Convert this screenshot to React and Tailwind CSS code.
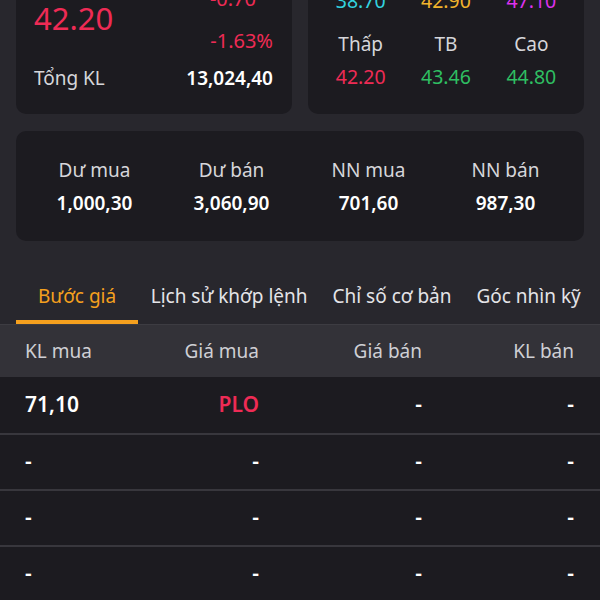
import React from "react";

const stats = [
  { label: "Dư mua", value: "1,000,30" },
  { label: "Dư bán", value: "3,060,90" },
  { label: "NN mua", value: "701,60" },
  { label: "NN bán", value: "987,30" },
];

const tabs = ["Bước giá", "Lịch sử khớp lệnh", "Chỉ số cơ bản", "Góc nhìn kỹ thuật"];

const rows = [
  { klMua: "71,10", giaMua: "PLO", giaBan: "-", klBan: "-" },
  { klMua: "-", giaMua: "-", giaBan: "-", klBan: "-" },
  { klMua: "-", giaMua: "-", giaBan: "-", klBan: "-" },
  { klMua: "-", giaMua: "-", giaBan: "-", klBan: "-" },
];

const PriceCol = ({ label, value, color }) => (
  <div className="flex flex-col items-center">
    <div className="h-[30px] leading-[30px] text-[19px] text-[#d6d6da]">{label}</div>
    <div className={`h-[30px] leading-[30px] text-[19.5px] mt-[3px] ${color}`}>{value}</div>
  </div>
);

export default function App() {
  return (
    <div className="w-[600px] h-[600px] overflow-hidden bg-[#28272d] font-['Noto_Sans',sans-serif]">
      {/* top summary cards */}
      <div className="grid grid-cols-2 gap-4 px-4 -mt-[60px]">
        <div className="rounded-[10px] bg-[#1c1b20] pt-[40px] pb-[21px] pl-[18px] pr-[19px]">
          <div className="flex h-[76px] items-center justify-between">
            <div className="text-[31px] leading-none text-[#ee2b55]">42.20</div>
            <div className="flex h-full flex-col items-end justify-between text-[20px] text-[#ee2b55]">
              <div className="h-[30px] leading-[30px] pr-[17px] translate-y-[4px]">-0.70</div>
              <div className="h-[30px] leading-[30px]">-1.63%</div>
            </div>
          </div>
          <div className="mt-[7px] flex h-[30px] items-center justify-between">
            <span className="text-[19px] text-[#d6d6da]">Tổng KL</span>
            <span className="text-[19px] font-semibold text-white">13,024,40</span>
          </div>
        </div>

        <div className="rounded-[10px] bg-[#1c1b20] pt-[13px] pb-[22px] px-[10px]">
          <div className="grid grid-cols-3">
            <PriceCol label="Sàn" value="38.70" color="text-[#33d2df]" />
            <PriceCol label="TC" value="42.90" color="text-[#f2b42c]" />
            <PriceCol label="Trần" value="47.10" color="text-[#dc32ec]" />
          </div>
          <div className="mt-[13px] grid grid-cols-3">
            <PriceCol label="Thấp" value="42.20" color="text-[#ee2b55]" />
            <PriceCol label="TB" value="43.46" color="text-[#2fbf62]" />
            <PriceCol label="Cao" value="44.80" color="text-[#2fbf62]" />
          </div>
        </div>
      </div>

      {/* order stats */}
      <div className="mx-4 mt-[17px] rounded-[10px] bg-[#1c1b20] px-[10px] pt-[24px] pb-[23px]">
        <div className="grid grid-cols-4">
          {stats.map((s) => (
            <div key={s.label} className="flex flex-col items-center">
              <div className="h-[30px] leading-[30px] text-[19px] text-[#d6d6da]">{s.label}</div>
              <div className="mt-[3px] h-[30px] leading-[30px] text-[19px] font-semibold text-white">
                {s.value}
              </div>
            </div>
          ))}
        </div>
      </div>

      {/* tabs */}
      <div className="mt-[24px] border-b border-[#3d3c42]">
        <div className="mr-[16px] flex h-[59px] overflow-hidden whitespace-nowrap">
          {tabs.map((t, i) => {
            const active = i === 0;
            return (
              <div
                key={t}
                className={`flex shrink-0 flex-col ${active ? "ml-4 px-[22px]" : "px-[12.5px]"}`}
              >
                <div
                  className={`mt-[16px] h-[30px] leading-[30px] text-[19px] ${
                    active ? "text-[#f5a01e]" : "text-[#e4e4e8]"
                  }`}
                >
                  {t}
                </div>
                <div className="flex-1" />
                <div className={`-mx-[22px] h-[4px] ${active ? "bg-[#f5a01e]" : "bg-transparent"}`} />
              </div>
            );
          })}
        </div>
      </div>

      {/* order book */}
      <div className="grid h-[52px] grid-cols-[120px_114px_163px_152px] items-center bg-[#333238] px-[25px] text-[19px] text-[#cfcfd4]">
        <div>KL mua</div>
        <div className="text-right">Giá mua</div>
        <div className="text-right">Giá bán</div>
        <div className="text-right">KL bán</div>
      </div>
      {rows.map((r, i) => (
        <div
          key={i}
          className={`grid h-[56px] grid-cols-[120px_114px_163px_152px] items-center bg-[#1c1b20] px-[25px] text-[21px] font-semibold text-white ${
            i > 0 ? "border-t-2 border-[#38373d]" : ""
          }`}
        >
          <div>{r.klMua}</div>
          <div className={`text-right ${r.giaMua === "PLO" ? "text-[#ee2b55]" : ""}`}>{r.giaMua}</div>
          <div className="text-right">{r.giaBan}</div>
          <div className="text-right">{r.klBan}</div>
        </div>
      ))}
    </div>
  );
}
